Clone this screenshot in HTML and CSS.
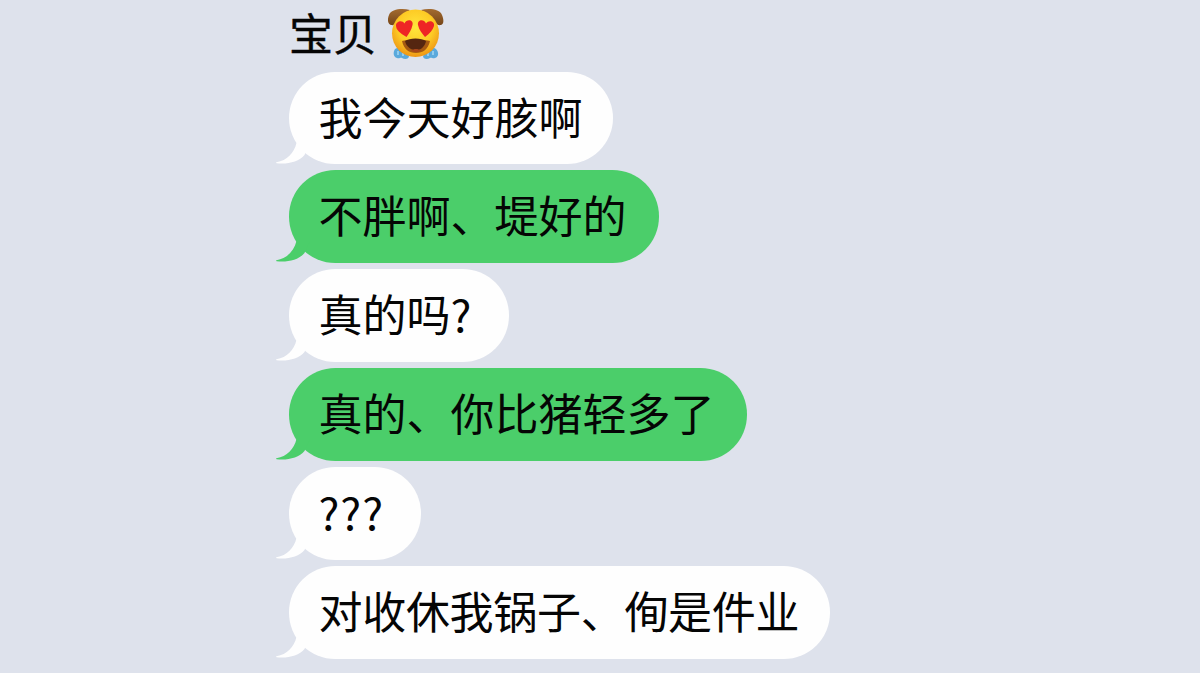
FILE: index.html
```html
<!DOCTYPE html>
<html lang="zh-CN">
<head>
<meta charset="utf-8">
<title>宝贝</title>
<link rel="stylesheet" href="styles.css">
</head>
<body>
<main class="chat">
  <header class="contact">
    <h1 class="name">宝贝</h1>
    <svg class="emoji" viewBox="0 0 58 54" aria-hidden="true">
      <defs>
        <radialGradient id="face" cx="50%" cy="38%" r="62%">
          <stop offset="0" stop-color="#ffe63c"/>
          <stop offset=".6" stop-color="#fdcb25"/>
          <stop offset="1" stop-color="#ee9515"/>
        </radialGradient>
        <linearGradient id="ear" x1="0" y1="0" x2="0" y2="1">
          <stop offset="0" stop-color="#a36b30"/>
          <stop offset="1" stop-color="#754518"/>
        </linearGradient>
      </defs>
      <path fill="#5aa9dc" d="M8 41c-2 3-2 8 2 9 2 1 4-1 5 0 3 2 7 1 7-2L14 38zM49 41c3 3 3 8-1 9-2 1-4-1-5 0-3 2-7 1-7-2l8-10z"/>
      <path fill="none" stroke="#a8daf4" stroke-width="1.4" d="M11 43v4M16 45v3M41 45v3M46 43v4"/>
      <path fill="url(#ear)" d="M23 2C15 0 4 1 2 7c-2 5-1 9 2 10 4 1 6-3 9-7zM34 2c8-2 19-1 21 5 2 5 2 9-1 10-4 1-7-3-10-7z"/>
      <ellipse cx="28.5" cy="25.3" rx="23.5" ry="23.8" fill="url(#face)"/>
      <path fill="#ee2525" d="M19.5 29C13 25 9 22 9 17.500c0-4 6-6 8.500-2 2-5 9.500-4 8 1.500-1 5-3.500 8-6 12z"/>
      <path fill="#ee2525" d="M38 29c-3-4-6-7-7-12-1-5.500 6-6.500 8-1.500 3-4 9-2 8 2.500-1 4-4 7-9 11z"/>
      <path fill="#a65a12" d="M15 33c4-1.500 7 0 11-1h6c4 1 7-.5 11 1-2 8.500-7 12-14 12s-12-3.500-14-12z"/>
      <path fill="#552610" d="M18 33c4-3.500 17-3.500 21 0-1 6-6 9-10 10-4-1-10-4-11-10z"/>
      <path fill="#a8461b" d="M24 42.500c3-2 7-2 10 0-3 2-7 2-10 0z"/>
    </svg>
  </header>
  <section class="messages">
    <div class="bubble white w1"><svg class="tail" viewBox="0 0 34 26"><path d="M20.500 0C18 10 11 17.500.5 19.200c-.8.300-.6.900.2 1C11 21.500 23 19 28.500 12L34 0z"/></svg>我今天好胲啊</div>
    <div class="bubble green w2"><svg class="tail" viewBox="0 0 34 26"><path d="M20.500 0C18 10 11 17.500.5 19.200c-.8.300-.6.900.2 1C11 21.500 23 19 28.500 12L34 0z"/></svg>不胖啊、堤好的</div>
    <div class="bubble white w3"><svg class="tail" viewBox="0 0 34 26"><path d="M20.500 0C18 10 11 17.500.5 19.200c-.8.300-.6.900.2 1C11 21.500 23 19 28.500 12L34 0z"/></svg>真的吗<span class="half">?</span></div>
    <div class="bubble green w4"><svg class="tail" viewBox="0 0 34 26"><path d="M20.500 0C18 10 11 17.500.5 19.200c-.8.300-.6.900.2 1C11 21.500 23 19 28.500 12L34 0z"/></svg>真的、你比猪轻多了</div>
    <div class="bubble white w5"><svg class="tail" viewBox="0 0 34 26"><path d="M20.500 0C18 10 11 17.500.5 19.200c-.8.300-.6.900.2 1C11 21.500 23 19 28.500 12L34 0z"/></svg><span class="half">???</span></div>
    <div class="bubble white w6"><svg class="tail" viewBox="0 0 34 26"><path d="M20.500 0C18 10 11 17.500.5 19.200c-.8.300-.6.900.2 1C11 21.500 23 19 28.500 12L34 0z"/></svg>对收休我锅子、侚是件业</div>
  </section>
</main>
</body>
</html>
```
FILE: styles.css
```css
* { box-sizing: border-box; }
body {
  margin: 0;
  height: 673px;
  overflow: hidden;
  background: #dee2ec;
  color: #050505;
  font-family: "Noto Sans CJK SC", sans-serif;
}
.chat { padding-left: 289px; }
.contact {
  display: flex;
  align-items: flex-start;
  height: 71.5px;
  padding-top: 8px;
  gap: 10px;
}
.name {
  margin: 0;
  font-size: 44px;
  font-weight: 400;
  line-height: 48px;
  -webkit-text-stroke: 0.4px #050505;
}
.emoji { width: 58px; height: 54px; }
.messages {
  display: flex;
  flex-direction: column;
  align-items: flex-start;
  gap: 6.300px;
}
.bubble {
  position: relative;
  height: 92.600px;
  padding-left: 29.500px;
  border-radius: 46.300px;
  font-size: 44px;
  line-height: 88px;
  white-space: nowrap;
}
.white { background: #fefefe; }
.green { background: #4bce6a; }
.tail {
  position: absolute;
  left: -13px;
  top: 71px;
  width: 34px;
  height: 26px;
}
.white .tail { fill: #fefefe; }
.green .tail { fill: #4bce6a; }
.half { letter-spacing: 1px; }
.w1 { width: 324px; }
.w2 { width: 370px; }
.w3 { width: 220px; }
.w4 { width: 458px; }
.w5 { width: 132px; }
.w6 { width: 541px; letter-spacing: -0.300px; }
```
